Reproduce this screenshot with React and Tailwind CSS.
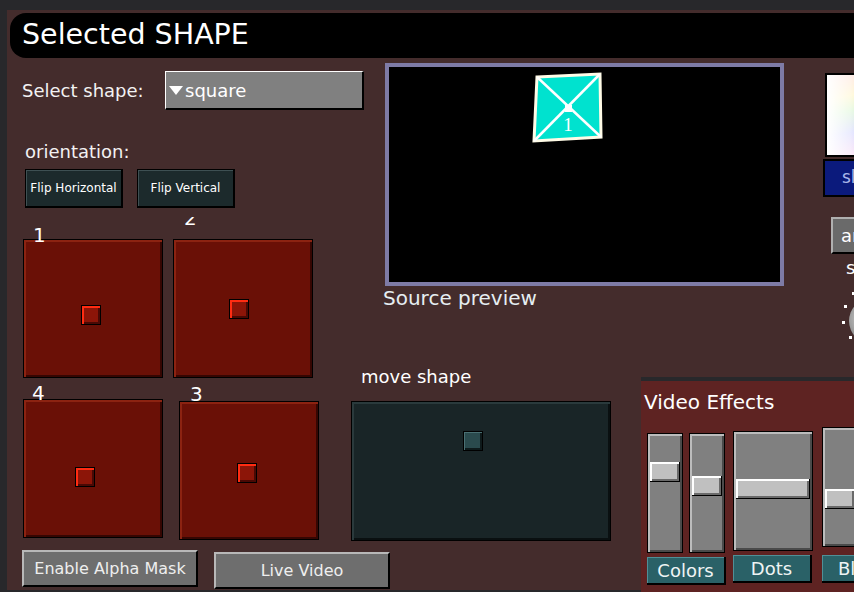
const Pad = ({ className = "", handle, children }) => (
  <div
    className={`relative h-[139px] w-[140px] shrink-0 border border-black bg-[#6a1006] shadow-[inset_2px_2px_0_#8c2311,inset_-2px_-2px_0_#360602] ${className}`}
  >
    {children}
    <div
      className={`absolute h-[20px] w-[20px] border border-black bg-[#8c1508] shadow-[inset_2px_2px_0_#ff2c12,inset_-2px_-2px_0_#4a0904] ${handle}`}
    />
  </div>
);

const Slider = ({ className, thumb }) => (
  <div
    className={`relative h-[120px] shrink-0 border border-black bg-[#808080] shadow-[inset_2px_2px_0_#bcbcbc,inset_-2px_-2px_0_#4a4a4a] ${className}`}
  >
    <div
      className={`absolute left-[2px] right-[2px] h-[20px] border-b border-r border-black bg-[#c0c0c0] shadow-[inset_2px_2px_0_#ffffff,inset_-2px_-2px_0_#6a6a6a] ${thumb}`}
    />
  </div>
);

const tealBtn =
  "flex h-[28px] w-[79px] shrink-0 items-center justify-center border-b-2 border-r-2 border-black bg-[#2a6167] text-[18px] text-[#eef4f4] shadow-[inset_1px_1px_0_#4f9097]";

const greyBtn =
  "flex h-[37px] w-[176px] shrink-0 items-center justify-center border-2 border-b-black border-l-[#b8b8b8] border-r-black border-t-[#b8b8b8] bg-[#6e6e6e] text-[16px] text-[#eeeeee]";

const flipBtn =
  "flex h-[39px] w-[98px] items-center justify-center border border-b-2 border-r-2 border-black bg-[#1c2a2c] text-[12px] text-white shadow-[inset_1px_1px_0_#3e5053]";

const App = () => {
  return (
    <div className="h-[592px] w-[854px] overflow-hidden bg-[#28282b] pl-[7px] pt-[10px] font-['DejaVu_Sans',sans-serif] text-[#f2f2f2]">
      <div className="flex h-[580px] w-[847px] flex-col bg-[#442c2c]">
        {/* title */}
        <div className="ml-[3px] mt-[3px] flex h-[45px] shrink-0 items-center rounded-l-[16px] bg-black pl-[12px] text-[28.5px] leading-none text-white">
          Selected SHAPE
        </div>

        {/* top section */}
        <div className="flex h-[319px] shrink-0">
          <div className="flex w-[378px] shrink-0 flex-col">
            <div className="mt-[13px] flex items-center">
              <span className="w-[158px] pl-[15px] text-[18px] leading-[20px]">
                Select shape:
              </span>
              <div className="flex h-[39px] w-[199px] items-center gap-[2px] border-b-2 border-l border-r-2 border-t border-b-black border-l-white border-r-black border-t-white bg-[#808080] pl-[3px] text-[18px] text-white">
                <svg width="14" height="9" viewBox="0 0 14 9">
                  <polygon points="0,0 14,0 7,9" fill="#ffffff" />
                </svg>
                <span>square</span>
              </div>
            </div>
            <div className="ml-[18px] mt-[32px] text-[18px] leading-[20px]">
              orientation:
            </div>
            <div className="ml-[18px] mt-[7px] flex gap-[14px]">
              <div className={flipBtn}>Flip Horizontal</div>
              <div className={flipBtn}>Flip Vertical</div>
            </div>
            <div className="ml-[16px] mt-[31px] flex gap-[10px]">
              <Pad handle="left-[57px] top-[65px]">
                <span className="absolute left-[9px] top-[-15px] text-[20px] leading-[20px] text-white">
                  1
                </span>
              </Pad>
              <Pad handle="left-[55px] top-[59px]">
                <div className="absolute left-[10px] top-[-23px] h-[9px] overflow-hidden">
                  <div className="-mt-[9px] text-[20px] leading-[20px] text-white">2</div>
                </div>
              </Pad>
            </div>
          </div>

          {/* preview */}
          <div className="mt-[5px] flex w-[399px] shrink-0 flex-col">
            <div className="h-[223px] border-4 border-[#7e7ba6] bg-black">
              <svg width="391" height="215" viewBox="0 0 391 215">
                <polygon
                  points="148,10 211,7 212,70 145,74"
                  fill="#00e2cf"
                  stroke="#fffbe6"
                  strokeWidth="3"
                />
                <line x1="148" y1="10" x2="212" y2="70" stroke="#ffffff" strokeWidth="2.5" />
                <line x1="211" y1="7" x2="145" y2="74" stroke="#ffffff" strokeWidth="2.5" />
                <rect x="176" y="38" width="7" height="7" fill="#ffffff" />
                <text
                  x="179"
                  y="64"
                  fill="#ffffff"
                  fontSize="19"
                  textAnchor="middle"
                  fontFamily="'Liberation Serif', serif"
                >
                  1
                </text>
              </svg>
            </div>
            <span className="-ml-[2px] text-[20px] leading-[24px] text-[#e6eef2]">
              Source preview
            </span>
          </div>

          {/* right column */}
          <div className="ml-[39px] flex w-[60px] shrink-0 flex-col">
            <div className="relative ml-[2px] mt-[15px] h-[84px] w-[50px] border-2 border-black bg-[linear-gradient(170deg,#ffc8c8,#fff0a8_28%,#c4f0b8_45%,#bcc0ff_70%,#ffc8ec)]">
              <div className="absolute inset-0 bg-gradient-to-r from-white via-white/70 to-transparent" />
            </div>
            <div className="mt-[2px] flex h-[38px] w-[60px] items-center border-2 border-black bg-[#0b1a7c] pl-[17px] text-[17px] text-[#aab6ea]">
              sl
            </div>
            <div className="ml-[8px] mt-[20px] flex h-[37px] w-[52px] items-center border-2 border-b-black border-l-[#b0b0b0] border-r-black border-t-[#b0b0b0] bg-[#6a6a6a] pl-[8px] text-[18px] text-white">
              ar
            </div>
            <div className="ml-[23px] mt-[4px] text-[18px] leading-[20px] text-white">s</div>
            <svg className="ml-[13px] mt-[12px]" width="47" height="52" viewBox="0 0 47 52">
              <defs>
                <radialGradient id="knob" cx="0.4" cy="0.45" r="0.6">
                  <stop offset="0" stopColor="#e0e0e0" />
                  <stop offset="1" stopColor="#7a7a7a" />
                </radialGradient>
              </defs>
              <circle cx="36" cy="31" r="23" fill="url(#knob)" />
              <rect x="16" y="2" width="3" height="3" fill="#ffffff" />
              <rect x="8" y="15" width="3" height="3" fill="#ffffff" />
              <rect x="6" y="31" width="3" height="3" fill="#ffffff" />
              <rect x="13" y="46" width="3" height="3" fill="#ffffff" />
            </svg>
          </div>
        </div>

        {/* bottom section */}
        <div className="flex flex-1 items-start">
          <div className="flex w-[344px] shrink-0 flex-col">
            <div className="ml-[16px] mt-[22px] flex items-start gap-[16px]">
              <Pad handle="left-[51px] top-[67px]">
                <span className="absolute left-[8px] top-[-17px] text-[20px] leading-[20px] text-white">
                  4
                </span>
              </Pad>
              <Pad className="mt-[2px]" handle="left-[57px] top-[61px]">
                <span className="absolute left-[10px] top-[-18px] text-[20px] leading-[20px] text-white">
                  3
                </span>
              </Pad>
            </div>
            <div className="ml-[15px] mt-[10px] flex items-start gap-[16px]">
              <div className={greyBtn}>Enable Alpha Mask</div>
              <div className={`${greyBtn} mt-[2px]`}>Live Video</div>
            </div>
          </div>

          <div className="-mt-[11px] flex w-[259px] shrink-0 flex-col">
            <span className="ml-[10px] text-[18px] leading-[22px] text-white">move shape</span>
            <div className="relative mt-[13px] h-[140px] w-[260px] border border-black bg-[#192527] shadow-[inset_2px_2px_0_#2a3a3c,inset_-2px_-2px_0_#0a1011]">
              <div className="absolute left-[111px] top-[29px] h-[20px] w-[20px] border border-black bg-[#2a4a4d] shadow-[inset_1px_1px_0_#4a7073,inset_-2px_-2px_0_#0e1a1b]" />
            </div>
          </div>

          {/* video effects */}
          <div className="ml-[31px] flex h-[215px] w-[230px] shrink-0 flex-col border-t-4 border-[#28282b] bg-[#5e2322] pt-[9px]">
            <span className="ml-[3px] text-[20px] leading-[24px] text-white">Video Effects</span>
            <div className="ml-[6px] flex items-start">
              <div className="mt-[19px] flex flex-col">
                <div className="flex gap-[6px]">
                  <Slider className="w-[36px]" thumb="top-[28px]" />
                  <Slider className="w-[36px]" thumb="top-[42px]" />
                </div>
                <div className={`${tealBtn} mt-[4px]`}>Colors</div>
              </div>
              <div className="ml-[7px] mt-[17px] flex flex-col">
                <Slider className="w-[80px]" thumb="top-[47px]" />
                <div className={`${tealBtn} mt-[4px]`}>Dots</div>
              </div>
              <div className="ml-[9px] mt-[13px] flex flex-col">
                <Slider className="w-[36px]" thumb="top-[61px]" />
                <div className={`${tealBtn} mt-[8px] justify-start pl-[16px]`}>Blur</div>
              </div>
            </div>
          </div>
        </div>
      </div>
    </div>
  );
};

export default App;
